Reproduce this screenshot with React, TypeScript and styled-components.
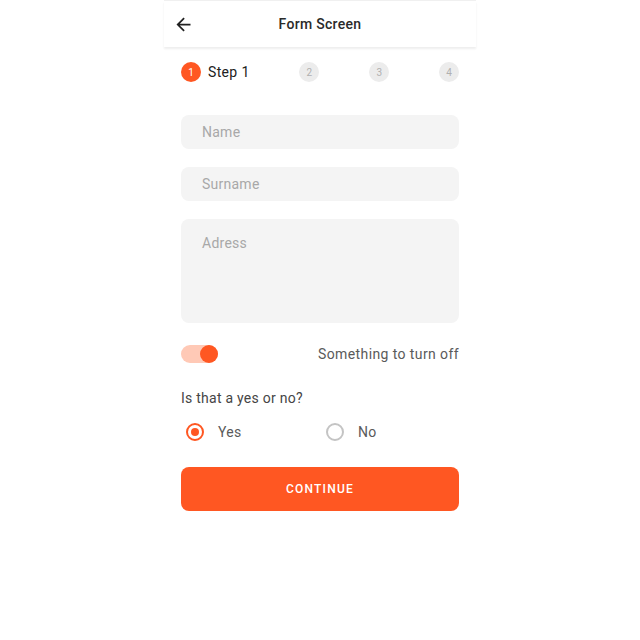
import React from "react";
import styled, { createGlobalStyle } from "styled-components";

const GlobalStyle = createGlobalStyle`
  html, body { margin: 0; padding: 0; background: #ffffff; }
  body { font-family: Roboto, "Noto Sans", Arial, sans-serif; }
  * { box-sizing: border-box; }
`;

const ORANGE = "#ff5722";

const Screen = styled.div`
  width: 312px;
  height: 640px;
  margin: 0 auto;
  background: #fff;
  border-top: 1px solid #f0f0f0;
  display: flex;
  flex-direction: column;
`;

const Header = styled.header`
  height: 46px;
  display: grid;
  grid-template-columns: 40px 1fr 40px;
  align-items: center;
  box-shadow: 0 2px 2px rgba(0, 0, 0, 0.07);
  position: relative;
  z-index: 1;
`;

const BackButton = styled.button`
  border: none;
  background: none;
  padding: 0 0 0 9px;
  height: 46px;
  display: flex;
  align-items: center;
  color: #212121;
  cursor: pointer;
`;

const Title = styled.h1`
  margin: 0;
  font-size: 14px;
  font-weight: 500;
  color: #2a2a2a;
  text-align: center;
  letter-spacing: 0.3px;
`;

const Body = styled.main`
  padding: 15px 17px 0;
  display: flex;
  flex-direction: column;
`;

const Steps = styled.div`
  display: flex;
  justify-content: space-between;
  align-items: center;
  height: 20px;
`;

const Step = styled.div`
  display: flex;
  align-items: center;
  gap: 7px;
`;

const StepDot = styled.span<{ $active?: boolean }>`
  width: 20px;
  height: 20px;
  border-radius: 50%;
  background: ${(p) => (p.$active ? ORANGE : "#ececec")};
  color: ${(p) => (p.$active ? "#fff" : "#b0b0b0")};
  font-size: 10px;
  display: flex;
  align-items: center;
  justify-content: center;
`;

const StepLabel = styled.span`
  font-size: 14px;
  color: #212121;
  letter-spacing: 0.35px;
`;

const Fields = styled.div`
  margin-top: 33px;
  display: flex;
  flex-direction: column;
  gap: 18px;
`;

const Input = styled.input`
  height: 34px;
  border: none;
  border-radius: 8px;
  background: #f4f4f4;
  padding: 0 21px;
  font-family: inherit;
  font-size: 14px;
  letter-spacing: 0.25px;
  color: #212121;
  outline: none;
  &::placeholder { color: #a8a8a8; }
`;

const TextArea = styled.textarea`
  height: 104px;
  border: none;
  border-radius: 8px;
  background: #f4f4f4;
  padding: 16px 21px;
  font-family: inherit;
  font-size: 14px;
  letter-spacing: 0.25px;
  resize: none;
  outline: none;
  &::placeholder { color: #a8a8a8; }
`;

const ToggleRow = styled.div`
  margin-top: 22px;
  display: flex;
  justify-content: space-between;
  align-items: center;
  height: 18px;
`;

const Track = styled.span`
  width: 37px;
  height: 18px;
  border-radius: 9px;
  background: #ffc9b6;
  display: flex;
  justify-content: flex-end;
`;

const Thumb = styled.span`
  width: 18px;
  height: 18px;
  border-radius: 50%;
  background: ${ORANGE};
`;

const Label = styled.span`
  font-size: 14px;
  color: #5a5a5a;
  letter-spacing: 0.4px;
`;

const Question = styled.p`
  margin: 26px 0 0;
  font-size: 14px;
  line-height: 18px;
  color: #454545;
  letter-spacing: 0.25px;
`;

const RadioRow = styled.div`
  margin-top: 16px;
  display: grid;
  grid-template-columns: 140px 1fr;
  height: 18px;
  align-items: center;
`;

const RadioOption = styled.label`
  display: flex;
  align-items: center;
  gap: 14px;
  padding-left: 5px;
  font-size: 14px;
  letter-spacing: 0.3px;
  color: #5a5a5a;
`;

const RadioCircle = styled.span<{ $checked?: boolean }>`
  width: 18px;
  height: 18px;
  border-radius: 50%;
  border: 2px solid ${(p) => (p.$checked ? ORANGE : "#c4c4c4")};
  display: flex;
  align-items: center;
  justify-content: center;
  &::after {
    content: "";
    width: 8px;
    height: 8px;
    border-radius: 50%;
    background: ${ORANGE};
    display: ${(p) => (p.$checked ? "block" : "none")};
  }
`;

const ContinueButton = styled.button`
  margin-top: 26px;
  height: 44px;
  border: none;
  border-radius: 8px;
  background: ${ORANGE};
  color: #fff;
  font-family: inherit;
  font-size: 12px;
  font-weight: 500;
  letter-spacing: 1.2px;
  cursor: pointer;
`;

export default function App() {
  return (
    <>
      <GlobalStyle />
      <Screen>
        <Header>
          <BackButton aria-label="Back">
            <svg width="21" height="21" viewBox="0 0 24 24" fill="currentColor">
              <path d="M20 11H7.83l5.59-5.59L12 4l-8 8 8 8 1.41-1.41L7.83 13H20v-2z" />
            </svg>
          </BackButton>
          <Title>Form Screen</Title>
          <span />
        </Header>
        <Body>
          <Steps>
            <Step>
              <StepDot $active>1</StepDot>
              <StepLabel>Step 1</StepLabel>
            </Step>
            <StepDot>2</StepDot>
            <StepDot>3</StepDot>
            <StepDot>4</StepDot>
          </Steps>
          <Fields>
            <Input placeholder="Name" />
            <Input placeholder="Surname" />
            <TextArea placeholder="Adress" />
          </Fields>
          <ToggleRow>
            <Track>
              <Thumb />
            </Track>
            <Label>Something to turn off</Label>
          </ToggleRow>
          <Question>Is that a yes or no?</Question>
          <RadioRow>
            <RadioOption>
              <RadioCircle $checked />
              Yes
            </RadioOption>
            <RadioOption>
              <RadioCircle />
              No
            </RadioOption>
          </RadioRow>
          <ContinueButton>CONTINUE</ContinueButton>
        </Body>
      </Screen>
    </>
  );
}
